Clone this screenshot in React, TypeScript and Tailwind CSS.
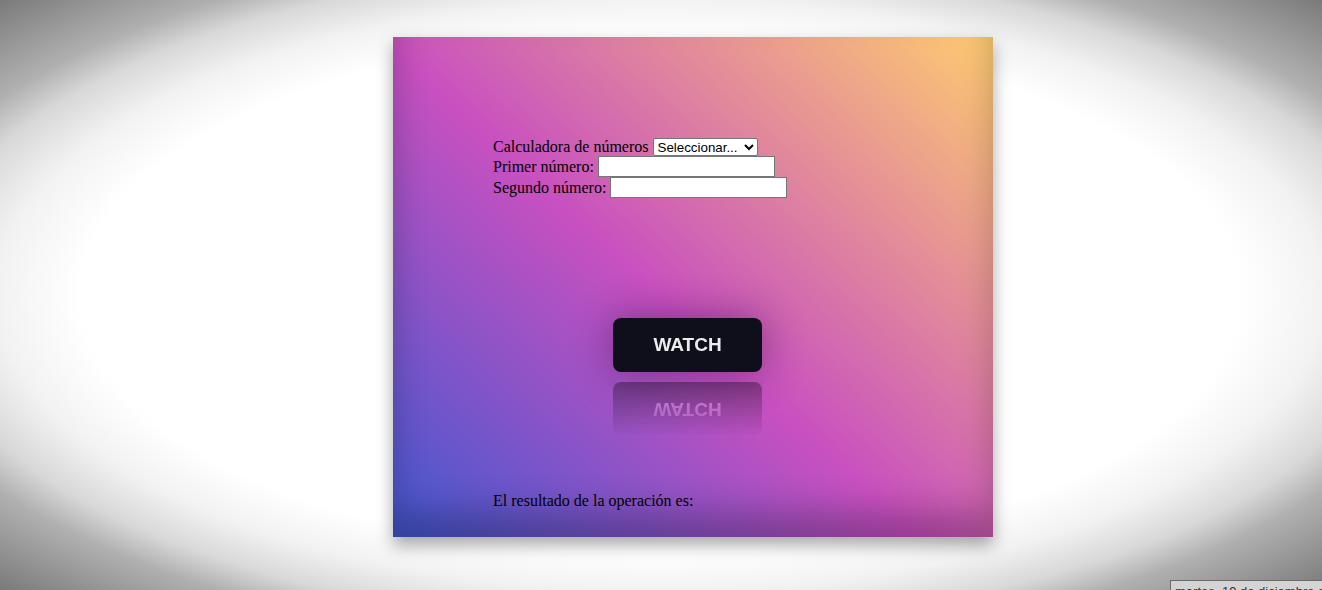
import React from "react";

const App = () => {
    return (
        <div className="relative h-[590px] w-full overflow-hidden bg-[radial-gradient(ellipse_at_center,#ffffff_62%,#f2f2f2_71%,#d8d8d8_79%,#b0b0b0_85%,#7a7a7a_100%)] font-['Liberation_Serif',serif] text-[16px] text-black">
            <div className="pl-[393px] pt-[37px]">
                <div className="flex h-[500px] w-[600px] flex-col bg-[#4158D0] bg-[linear-gradient(43deg,#4158D0_0%,#C850C0_46%,#FFCC70_100%)] px-[100px] pt-[100px] shadow-[inset_0_-25px_35px_rgba(0,0,0,0.25),0_8px_16px_rgba(0,0,0,0.35)]">
                    <div className="flex h-[19px] items-center">
                        <span>Calculadora de números</span>
                        <select className="ml-[4px] h-[18px] w-[105px] rounded-[2px] border border-[#767676] bg-white font-['Liberation_Sans',Arial,sans-serif] text-[13.33px] text-black">
                            <option>Seleccionar...</option>
                            <option>Sumar</option>
                            <option>Restar</option>
                            <option>Multiplicar</option>
                            <option>Dividir</option>
                        </select>
                    </div>
                    <div className="flex h-[21px] items-center">
                        <span>Primer número:</span>
                        <input type="text" className="ml-[4px] h-[21px] w-[177px] border border-[#767676] bg-white px-[2px] font-['Liberation_Sans',Arial,sans-serif] text-[13.33px]" />
                    </div>
                    <div className="flex h-[21px] items-center">
                        <span>Segundo número:</span>
                        <input type="text" className="ml-[4px] h-[21px] w-[177px] border border-[#767676] bg-white px-[2px] font-['Liberation_Sans',Arial,sans-serif] text-[13.33px]" />
                    </div>

                    <button className="ml-[120px] mt-[120px] flex h-[54px] w-[149px] items-center justify-center rounded-[8px] bg-[#0e0f1a] font-['Liberation_Sans',Arial,sans-serif] text-[19px] font-bold text-[#ececec] shadow-[0_0_40px_rgba(40,10,60,0.45)] [-webkit-box-reflect:below_10px_linear-gradient(transparent,rgba(0,0,0,0.4))]">
                        WATCH
                    </button>

                    <p className="mt-[120px] leading-[18px]">El resultado de la operación es:</p>
                </div>
            </div>

            <div className="absolute left-[1170px] top-[580px] whitespace-nowrap border border-[#6b6b6b] bg-[#d4d4d4] px-[4px] py-[1px] font-['Liberation_Sans',Arial,sans-serif] text-[13px] text-[#333]">
                martes, 19 de diciembre de 2023
            </div>
        </div>
    );
};

export default App;
